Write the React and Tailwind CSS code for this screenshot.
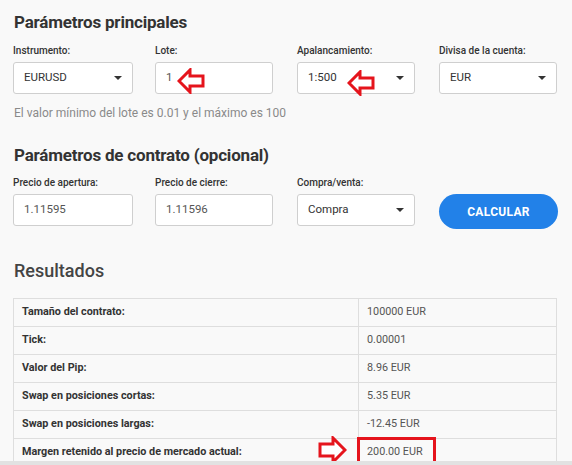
import React from "react";

const font = { fontFamily: "Roboto, 'Liberation Sans', sans-serif" };

function Caret() {
  return (
    <svg width="8" height="4" viewBox="0 0 8 4" className="shrink-0">
      <polygon points="0,0 8,0 4,4" fill="#333" />
    </svg>
  );
}

function Select({ value }) {
  return (
    <div className="flex h-[32px] items-center justify-between rounded-[3px] border border-[#cfcfcf] bg-white pl-[10px] pr-[10px] text-[11.5px] text-[#333]">
      <span>{value}</span>
      <Caret />
    </div>
  );
}

function Input({ value }) {
  return (
    <div className="flex h-[32px] items-center rounded-[3px] border border-[#cfcfcf] bg-white pl-[10px] text-[11.5px] text-[#555]">
      {value}
    </div>
  );
}

function Field({ label, children, className = "" }) {
  return (
    <div className={"relative flex flex-col " + className}>
      <div className="h-[14px] text-[10px] font-medium leading-[14px] text-[#333]">{label}</div>
      <div className="mt-[4px]">{children}</div>
    </div>
  );
}

function LeftArrow({ className }) {
  return (
    <svg width="28" height="26" viewBox="0 0 28 26" className={className}>
      <polygon
        points="2,13 13,2 13,8 26,8 26,18 13,18 13,24"
        fill="white"
        stroke="#e5141c"
        strokeWidth="3"
        strokeLinejoin="miter"
      />
    </svg>
  );
}

function RightArrow({ className }) {
  return (
    <svg width="29" height="28" viewBox="0 0 29 28" className={className}>
      <polygon
        points="27,14 15,2 15,8 2,8 2,20 15,20 15,26"
        fill="white"
        stroke="#e5141c"
        strokeWidth="3"
        strokeLinejoin="miter"
      />
    </svg>
  );
}

const rows = [
  ["Tamaño del contrato:", "100000 EUR"],
  ["Tick:", "0.00001"],
  ["Valor del Pip:", "8.96 EUR"],
  ["Swap en posiciones cortas:", "5.35 EUR"],
  ["Swap en posiciones largas:", "-12.45 EUR"],
  ["Margen retenido al precio de mercado actual:", "200.00 EUR"],
];

export default function App() {
  return (
    <div className="relative h-[465px] w-[572px] overflow-hidden bg-[#f9f9f9]" style={font}>
      <div className="pl-[13px] pr-[14px] pt-[10px]">
        <h2 className="h-[24px] pl-[1px] text-[17px] font-bold leading-[24px] tracking-[-0.2px] text-[#333]">
          Parámetros principales
        </h2>

        <div className="mt-[10px] flex">
          <Field label="Instrumento:" className="w-[120px]">
            <Select value="EURUSD" />
          </Field>
          <Field label="Lote:" className="ml-[22px] w-[118px]">
            <Input value="1" />
            <LeftArrow className="absolute left-[22px] top-[24px]" />
          </Field>
          <Field label="Apalancamiento:" className="ml-[24px] w-[118px]">
            <Select value="1:500" />
            <LeftArrow className="absolute left-[50px] top-[26px]" />
          </Field>
          <Field label="Divisa de la cuenta:" className="ml-[24px] w-[118px]">
            <Select value="EUR" />
          </Field>
        </div>

        <p className="mt-[11px] h-[16px] pl-[1px] text-[12px] leading-[16px] text-[#8a8a8a]">
          El valor mínimo del lote es 0.01 y el máximo es 100
        </p>

        <h2 className="mt-[22px] h-[24px] pl-[1px] text-[17px] font-bold leading-[24px] tracking-[-0.2px] text-[#333]">
          Parámetros de contrato (opcional)
        </h2>

        <div className="mt-[9px] flex">
          <Field label="Precio de apertura:" className="w-[120px]">
            <Input value="1.11595" />
          </Field>
          <Field label="Precio de cierre:" className="ml-[22px] w-[118px]">
            <Input value="1.11596" />
          </Field>
          <Field label="Compra/venta:" className="ml-[24px] w-[118px]">
            <Select value="Compra" />
          </Field>
          <div className="ml-[24px] w-[119px] pt-[18px]">
            <button className="flex h-[35px] w-full items-center justify-center rounded-full bg-[#2281e8] text-[12px] font-bold tracking-[0.3px] text-white">
              CALCULAR
            </button>
          </div>
        </div>

        <h2 className="mt-[30px] h-[24px] pl-[1px] text-[18px] font-medium leading-[24px] text-[#444]">
          Resultados
        </h2>

        <table className="mt-[15px] w-[544px] border-collapse text-[10.8px]">
          <tbody>
            {rows.map(([k, v], i) => (
              <tr key={i} className="h-[28px]">
                <td className="w-[345px] border border-[#dedede] pl-[8px] font-bold text-[#333]">{k}</td>
                <td className="relative border border-[#dedede] pl-[8px] text-[#555]">
                  {v}
                  {i === rows.length - 1 && (
                    <>
                      <div className="absolute left-[-2px] top-[-2px] h-[27px] w-[79px] border-[3px] border-[#e5141c]" />
                      <RightArrow className="absolute left-[-41px] top-[-3px]" />
                    </>
                  )}
                </td>
              </tr>
            ))}
          </tbody>
        </table>
      </div>
      <div className="absolute bottom-0 left-0 h-[4px] w-full bg-[#e2e2e2]" />
    </div>
  );
}
